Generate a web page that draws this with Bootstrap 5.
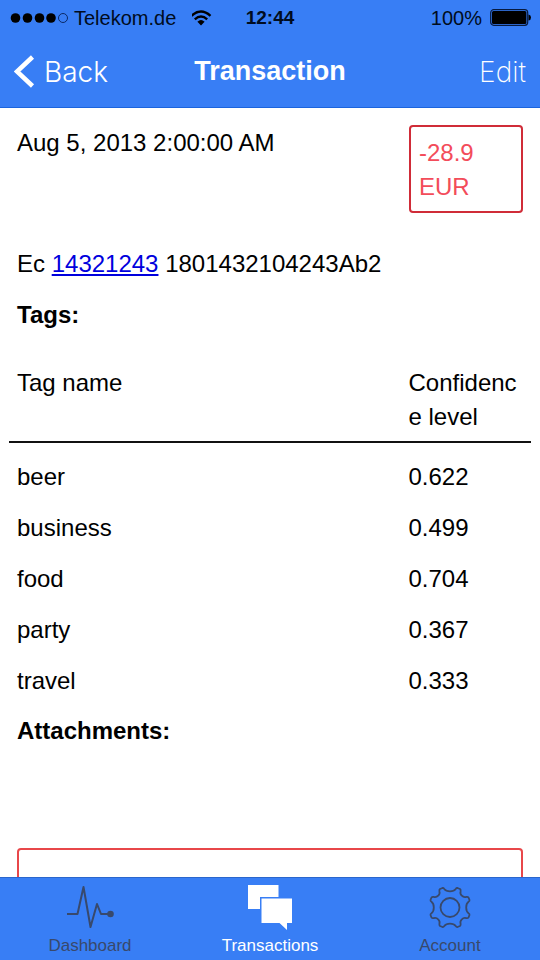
<!DOCTYPE html>
<html lang="en">
<head>
<meta charset="utf-8">
<meta name="viewport" content="width=device-width, initial-scale=1">
<title>Transaction</title>
<link href="https://cdn.jsdelivr.net/npm/bootstrap@5.3.0/dist/css/bootstrap.min.css" rel="stylesheet">
<style>
  body { font-family: "Liberation Sans", Arial, sans-serif; font-size: 24px; line-height: 34px; color: #000; background: #fff; }
  .app-bar { background: #387ef5; }
  .status-bar { height: 35px; font-size: 20px; line-height: 34px; color: #000c20; }
  .status-bar .clock { font-size: 19px; }
  .status-side { flex: 1 1 0; }
  .title-bar { height: 73px; border-bottom: 1px solid #1b64dd; color: #fff; }
  .title-bar .status-side { padding: 0 14px; }
  .title-bar h1 { font-size: 27px; line-height: 34px; }
  .title-bar .btn { font-family: Inter, "Liberation Sans", sans-serif; font-size: 28px; line-height: 34px; color: #fff; }
  .btn-back { font-weight: 300; }
  .title-bar .btn-edit { font-weight: 200; }
  .screen { padding: 18px 17px 0; }
  .amount { width: 114px; margin-top: -1px; padding: 9px 8px 7px; border: 2px solid #d02c38; border-radius: 4px; color: #f34c5a; }
  .entry { margin: 34px 0 17px; }
  .entry a { color: #00d; }
  .section-title { font-size: 24px; line-height: 34px; font-weight: 700; }
  .tag-table { width: calc(100% + 16px); margin: 26px -8px 0; table-layout: fixed; }
  .tag-table th, .tag-table td { padding: 8px; font-weight: 400; vertical-align: top; }
  .tag-table thead tr { border-bottom: 2px solid #111; }
  .tag-table thead th { padding-bottom: 7px; }
  .tag-table tbody td { padding-bottom: 9px; }
  .tag-table tbody tr:first-child td { padding-top: 17px; }
  .tag-table tbody tr:last-child td { padding-bottom: 8px; }
  .col-level { width: 25%; }
  .attachment-box { height: 120px; margin-top: 100px; border: 2px solid #e8474a; border-radius: 4px; }
  .tab-bar { height: 83px; border-top: 1px solid #2b66cc; font-size: 17px; line-height: 20px; }
  .tab-bar a { color: #38496c; padding-top: 6px; }
  .tab-bar a.active { color: #fff; }
</style>
<script defer src="https://cdn.jsdelivr.net/npm/bootstrap@5.3.0/dist/js/bootstrap.bundle.min.js"></script>
</head>
<body>
<div class="d-flex flex-column vh-100 overflow-hidden">
  <header class="app-bar flex-shrink-0">
    <div class="status-bar d-flex align-items-center">
      <div class="status-side d-flex align-items-center ps-2">
        <svg class="flex-shrink-0" width="62" height="12" viewBox="0 0 62 12" aria-hidden="true">
          <g fill="#000"><circle cx="7.500" cy="6" r="4.800"/><circle cx="19.500" cy="6" r="4.800"/><circle cx="31.500" cy="6" r="4.800"/><circle cx="43" cy="6" r="4.800"/></g>
          <circle cx="55" cy="6" r="4.500" fill="none" stroke="#0b2a66"/>
        </svg>
        <span class="ms-1">Telekom.de</span>
        <svg class="ms-3" width="22" height="16" viewBox="0 0 22 16" aria-hidden="true">
          <g fill="none" stroke="#000" stroke-width="2.400"><path d="M-.5 5.800Q9-2.600 18.500 5.800"/><path d="M2.800 9.300Q9 3.600 15.200 9.300"/></g>
          <path d="M5.400 11.700Q9 8.400 12.600 11.700L9 15.500Z"/>
        </svg>
      </div>
      <span class="clock fw-bold">12:44</span>
      <div class="status-side d-flex align-items-center justify-content-end pe-2">
        <span>100%</span>
        <svg class="ms-2" width="42" height="17" viewBox="0 0 42 17" aria-hidden="true">
          <rect x=".7" y=".7" width="37" height="15.600" rx="3" fill="none" stroke="#061a40" stroke-width="1.200"/>
          <rect x="2" y="2" width="34.400" height="13" rx="1.500"/><path d="M38.500 5.500q2.500.5 2.500 3t-2.500 3z"/>
        </svg>
      </div>
    </div>
    <nav class="title-bar d-flex align-items-center" aria-label="Page">
      <div class="status-side">
        <button type="button" class="btn btn-back border-0 p-0 d-inline-flex align-items-center">
          <svg class="me-2" width="22" height="34" viewBox="0 0 22 34" fill="none" stroke="#fff" stroke-width="4.500" aria-hidden="true"><path d="M18.500 2L3 16.500L18.500 31"/></svg>Back</button>
      </div>
      <h1 class="m-0 fw-bold">Transaction</h1>
      <div class="status-side text-end"><button type="button" class="btn btn-edit border-0 p-0">Edit</button></div>
    </nav>
  </header>

  <main class="screen flex-grow-1 overflow-hidden">
    <div class="d-flex justify-content-between align-items-start">
      <div>Aug 5, 2013 2:00:00 AM</div>
      <div class="amount">-28.9 EUR</div>
    </div>
    <p class="entry">Ec <a href="#">14321243</a> 1801432104243Ab2</p>
    <h2 class="section-title m-0">Tags:</h2>
    <table class="tag-table">
      <thead><tr><th scope="col">Tag name</th><th scope="col" class="col-level text-break">Confidence level</th></tr></thead>
      <tbody>
        <tr><td>beer</td><td>0.622</td></tr>
        <tr><td>business</td><td>0.499</td></tr>
        <tr><td>food</td><td>0.704</td></tr>
        <tr><td>party</td><td>0.367</td></tr>
        <tr><td>travel</td><td>0.333</td></tr>
      </tbody>
    </table>
    <h2 class="section-title mt-2 mb-0">Attachments:</h2>
    <div class="attachment-box"></div>
  </main>

  <nav class="app-bar tab-bar d-flex flex-shrink-0" aria-label="Sections">
    <a href="#" class="col-4 d-flex flex-column align-items-center text-decoration-none">
      <svg width="48" height="48" viewBox="0 0 48 48" fill="none" stroke="currentColor" stroke-width="2" aria-hidden="true"><path d="M1 30H11.500L17.500 3L24.500 43L31 20L35 30H44" stroke-linejoin="round"/><circle cx="44.500" cy="30" r="3.300" fill="currentColor" stroke="none"/></svg>
      <span class="mt-1">Dashboard</span>
    </a>
    <a href="#" class="active col-4 d-flex flex-column align-items-center text-decoration-none" aria-current="page">
      <svg width="48" height="48" viewBox="0 0 48 48" fill="currentColor" aria-hidden="true"><path d="M2 1H32.500V13H14V25H2Z"/><path d="M15.500 14.500H46V39H41V46L33.500 39H15.500Z"/></svg>
      <span class="mt-1">Transactions</span>
    </a>
    <a href="#" class="col-4 d-flex flex-column align-items-center text-decoration-none">
      <svg width="48" height="48" viewBox="0 0 48 48" fill="none" stroke="currentColor" stroke-width="1.800" stroke-linejoin="round" aria-hidden="true">
        <circle cx="24" cy="23.500" r="9.500"/>
        <path d="M16.500 4Q17.500 3.800 18.300 5Q20 7.300 24 7.300Q28 7.300 29.700 5Q30.500 3.800 31.500 4L34 5Q34.900 5.700 34.600 7.200Q33.800 9.800 35.800 11.700Q37.700 13.700 40.300 12.900Q41.800 12.600 42.500 13.500L43.500 16Q43.700 17 42.500 17.800Q40.200 19.500 40.200 23.500Q40.200 27.500 42.500 29.200Q43.700 30 43.500 31L42.500 33.500Q41.800 34.400 40.300 34.100Q37.700 33.300 35.800 35.300Q33.800 37.200 34.600 39.800Q34.900 41.300 34 42L31.500 43Q30.500 43.200 29.700 42Q28 39.700 24 39.700Q20 39.700 18.300 42Q17.500 43.200 16.500 43L14 42Q13.100 41.300 13.400 39.800Q14.200 37.200 12.200 35.300Q10.300 33.300 7.700 34.100Q6.200 34.400 5.500 33.500L4.500 31Q4.300 30 5.500 29.200Q7.800 27.500 7.800 23.500Q7.800 19.500 5.500 17.800Q4.300 17 4.500 16L5.500 13.500Q6.200 12.600 7.700 12.900Q10.300 13.700 12.200 11.700Q14.200 9.800 13.400 7.200Q13.100 5.700 14 5Z"/>
      </svg>
      <span class="mt-1">Account</span>
    </a>
  </nav>
</div>
</body>
</html>
